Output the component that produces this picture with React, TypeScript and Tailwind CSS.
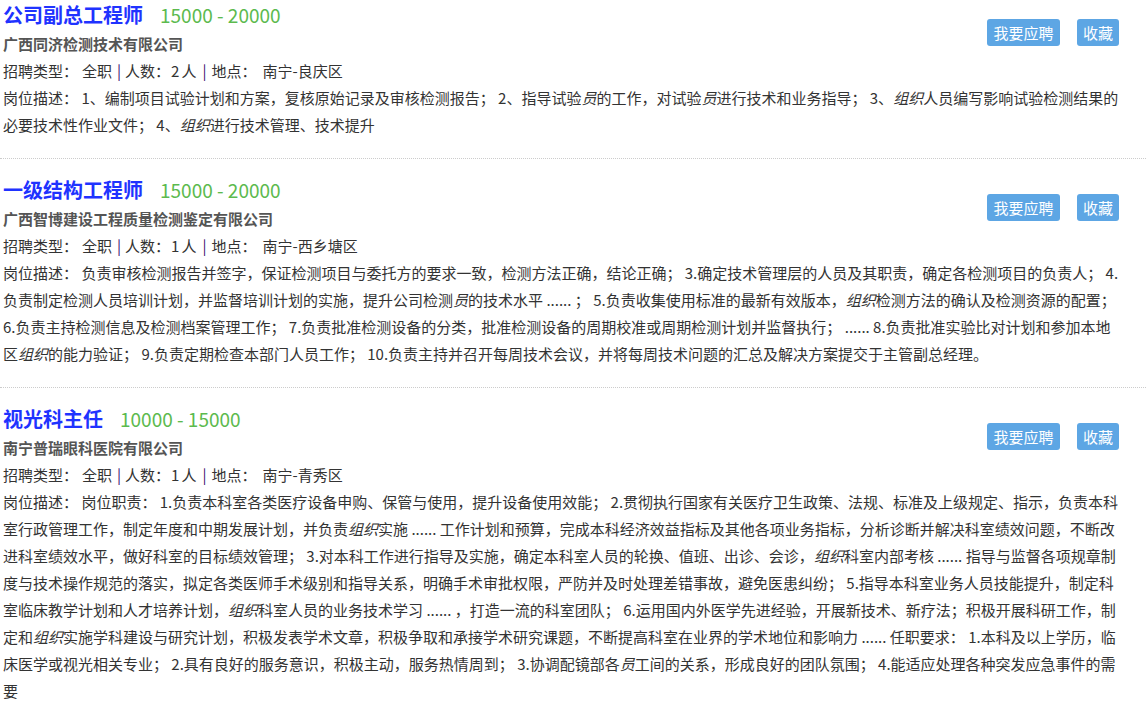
const jobs = [
  {
    title: "公司副总工程师",
    salary: "15000 - 20000",
    company: "广西同济检测技术有限公司",
    count: "2",
    place: "南宁-良庆区",
    desc: "1、编制项目试验计划和方案，复核原始记录及审核检测报告； 2、指导试验*员*的工作，对试验*员*进行技术和业务指导； 3、*组织*人员编写影响试验检测结果的必要技术性作业文件； 4、*组织*进行技术管理、技术提升",
  },
  {
    title: "一级结构工程师",
    salary: "15000 - 20000",
    company: "广西智博建设工程质量检测鉴定有限公司",
    count: "1",
    place: "南宁-西乡塘区",
    desc: "负责审核检测报告并签字，保证检测项目与委托方的要求一致，检测方法正确，结论正确； 3.确定技术管理层的人员及其职责，确定各检测项目的负责人； 4.负责制定检测人员培训计划，并监督培训计划的实施，提升公司检测*员*的技术水平 ...... ； 5.负责收集使用标准的最新有效版本，*组织*检测方法的确认及检测资源的配置；6.负责主持检测信息及检测档案管理工作； 7.负责批准检测设备的分类，批准检测设备的周期校准或周期检测计划并监督执行； ...... 8.负责批准实验比对计划和参加本地区*组织*的能力验证； 9.负责定期检查本部门人员工作； 10.负责主持并召开每周技术会议，并将每周技术问题的汇总及解决方案提交于主管副总经理。",
  },
  {
    title: "视光科主任",
    salary: "10000 - 15000",
    company: "南宁普瑞眼科医院有限公司",
    count: "1",
    place: "南宁-青秀区",
    desc: "岗位职责： 1.负责本科室各类医疗设备申购、保管与使用，提升设备使用效能； 2.贯彻执行国家有关医疗卫生政策、法规、标准及上级规定、指示，负责本科室行政管理工作，制定年度和中期发展计划，并负责*组织*实施 ...... 工作计划和预算，完成本科经济效益指标及其他各项业务指标，分析诊断并解决科室绩效问题，不断改进科室绩效水平，做好科室的目标绩效管理； 3.对本科工作进行指导及实施，确定本科室人员的轮换、值班、出诊、会诊，*组织*科室内部考核 ...... 指导与监督各项规章制度与技术操作规范的落实，拟定各类医师手术级别和指导关系，明确手术审批权限，严防并及时处理差错事故，避免医患纠纷； 5.指导本科室业务人员技能提升，制定科室临床教学计划和人才培养计划，*组织*科室人员的业务技术学习 ...... ，打造一流的科室团队； 6.运用国内外医学先进经验，开展新技术、新疗法；积极开展科研工作，制定和*组织*实施学科建设与研究计划，积极发表学术文章，积极争取和承接学术研究课题，不断提高科室在业界的学术地位和影响力 ...... 任职要求： 1.本科及以上学历，临床医学或视光相关专业； 2.具有良好的服务意识，积极主动，服务热情周到； 3.协调配镜部各*员*工间的关系，形成良好的团队氛围； 4.能适应处理各种突发应急事件的需要",
  },
];

// highlighted keywords come wrapped in *...* and show in italics
function Desc({ text }: { text: string }) {
  return (
    <>
      {text.split(/(\*[^*]+\*)/).map((part, i) =>
        part.startsWith("*") ? <i key={i}>{part.slice(1, -1)}</i> : <span key={i}>{part}</span>
      )}
    </>
  );
}

export default function App() {
  return (
    <div className="w-[1146px] bg-white font-['Noto_Sans_CJK_SC','Microsoft_YaHei',sans-serif] text-[#333]">
      {jobs.map((job, idx) => (
        <div
          key={job.title}
          className={`border-b border-dotted border-[#ccc] pb-[20px] pl-[3px] pr-[22px] ${idx === 0 ? "pt-0" : "pt-[16px]"}`}
        >
          <div className="flex justify-between">
            <div>
              <div className="flex items-center gap-[17px] h-[30px]">
                <span className="text-[20px] font-bold text-[#1f33ff]">{job.title}</span>
                <span className="text-[19px] text-[#5cba4e]">{job.salary}</span>
              </div>
              <div className="text-[15px] leading-[27px] font-bold text-[#555]">{job.company}</div>
            </div>
            <div className="flex gap-[17px] mt-[19px] mr-[5px] h-[27px]">
              <button className="rounded-[3px] bg-[#5da6e4] px-[6.5px] text-[15px] text-white leading-[27px]">我要应聘</button>
              <button className="rounded-[3px] bg-[#5da6e4] px-[6px] text-[15px] text-white leading-[27px]">收藏</button>
            </div>
          </div>
          <div className="text-[15px] leading-[27px]">
            招聘类型：<span className="ml-[4px]">全职</span>
            <span className="ml-[5px] mr-[4px] text-[#3b1070]">|</span>人数：
            <span className="ml-[1px]">{job.count}</span>
            <span className="ml-[2px]">人</span>
            <span className="ml-[6px] mr-[5px] text-[#3b1070]">|</span>地点：
            <span className="ml-[6px]">{job.place}</span>
          </div>
          <div className="text-[15px] leading-[27px]">
            岗位描述：&nbsp;<Desc text={job.desc} />
          </div>
        </div>
      ))}
    </div>
  );
}
